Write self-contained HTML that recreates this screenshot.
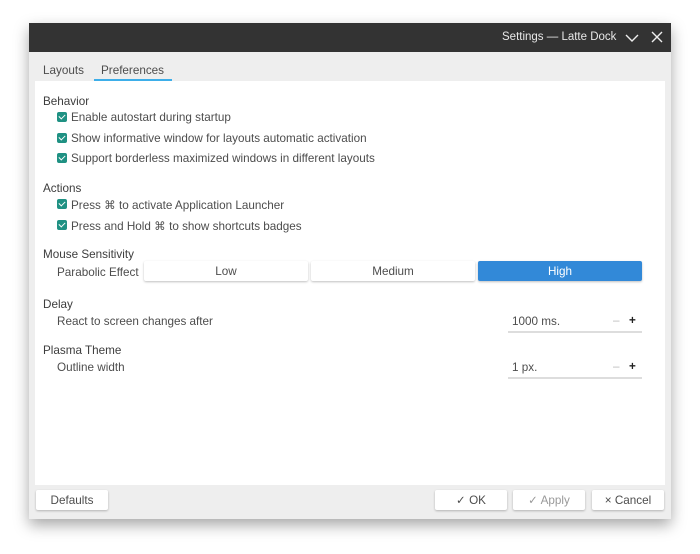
<!DOCTYPE html><html><head><style>
body{margin:0;width:700px;height:554px;background:#fff;font-family:"Liberation Sans",sans-serif;font-size:11.7px;color:#4d4d4d;position:relative;overflow:hidden}
.win{position:absolute;left:29px;top:23px;width:642px;height:496px;background:#eeeeee;box-shadow:0 6px 14px rgba(0,0,0,.35)}
.tb{position:absolute;left:0;top:0;width:642px;height:29px;background:#333}
.t{position:absolute;white-space:nowrap}
.content{position:absolute;left:6px;top:58px;width:630px;height:404px;background:#fff}
.h{color:#3d3d3d}
.cb{position:absolute;width:10px;height:10px;background:#1f9183;border-radius:2px}
.cb:after{content:"";position:absolute;left:3px;top:1px;width:3px;height:5px;border:solid #fff;border-width:0 1.5px 1.5px 0;transform:rotate(45deg)}
.btn{position:absolute;background:#fff;border-radius:2px;box-shadow:0 1px 2px rgba(0,0,0,.25);text-align:center;line-height:21px;height:20px}
.sp{position:absolute;border-bottom:2px solid #ddd;width:134px;height:20px}
</style></head><body>
<div class="win">
<div class="tb"><span class="t" style="left:473px;top:8px;color:#e8e8e8;font-size:11.5px">Settings — Latte Dock</span>
<svg style="position:absolute;left:596px;top:10px" width="14" height="10"><path d="M1 2 L7 8 L13 2" stroke="#eee" stroke-width="1.4" fill="none"/></svg>
<svg style="position:absolute;left:622px;top:8px" width="12" height="12"><path d="M1 1 L11 11 M11 1 L1 11" stroke="#eee" stroke-width="1.4"/></svg></div>
<span class="t" style="left:14px;top:41px">Layouts</span>
<span class="t" style="left:72px;top:41px">Preferences</span>
<div style="position:absolute;left:65px;top:56px;width:78px;height:2px;background:#3daee9"></div>
<div class="content"></div>
<div class="btn" style="left:7px;top:467px;width:72px">Defaults</div>
<div class="btn" style="left:406px;top:467px;width:72px">✓ OK</div>
<div class="btn" style="left:484px;top:467px;width:72px;color:#999">✓ Apply</div>
<div class="btn" style="left:563px;top:467px;width:72px">× Cancel</div>
</div>
<span class="t h" style="left:43px;top:95px">Behavior</span>
<div class="cb" style="left:57px;top:112px"></div><span class="t" style="left:71px;top:111px">Enable autostart during startup</span>
<div class="cb" style="left:57px;top:133px"></div><span class="t" style="left:71px;top:132px">Show informative window for layouts automatic activation</span>
<div class="cb" style="left:57px;top:153px"></div><span class="t" style="left:71px;top:152px">Support borderless maximized windows in different layouts</span>
<span class="t h" style="left:43px;top:182px">Actions</span>
<div class="cb" style="left:57px;top:199px"></div><span class="t" style="left:71px;top:198px">Press ⌘ to activate Application Launcher</span>
<div class="cb" style="left:57px;top:220px"></div><span class="t" style="left:71px;top:219px">Press and Hold ⌘ to show shortcuts badges</span>
<span class="t h" style="left:43px;top:248px">Mouse Sensitivity</span>
<span class="t" style="left:57px;top:266px">Parabolic Effect</span>
<div class="btn" style="left:144px;top:261px;width:164px">Low</div>
<div class="btn" style="left:311px;top:261px;width:164px">Medium</div>
<div class="btn" style="left:478px;top:261px;width:164px;background:#3289d8;color:#fff">High</div>
<span class="t h" style="left:43px;top:298px">Delay</span>
<span class="t" style="left:57px;top:315px">React to screen changes after</span>
<div class="sp" style="left:508px;top:311px"></div>
<span class="t" style="left:512px;top:315px">1000 ms.</span><span class="t" style="left:613px;top:314px;color:#bbb">–</span><span class="t" style="left:629px;top:314px;color:#222;font-weight:bold">+</span>
<span class="t h" style="left:43px;top:344px">Plasma Theme</span>
<span class="t" style="left:57px;top:361px">Outline width</span>
<div class="sp" style="left:508px;top:357px"></div>
<span class="t" style="left:512px;top:361px">1 px.</span><span class="t" style="left:613px;top:360px;color:#bbb">–</span><span class="t" style="left:629px;top:360px;color:#222;font-weight:bold">+</span>
</body></html>
